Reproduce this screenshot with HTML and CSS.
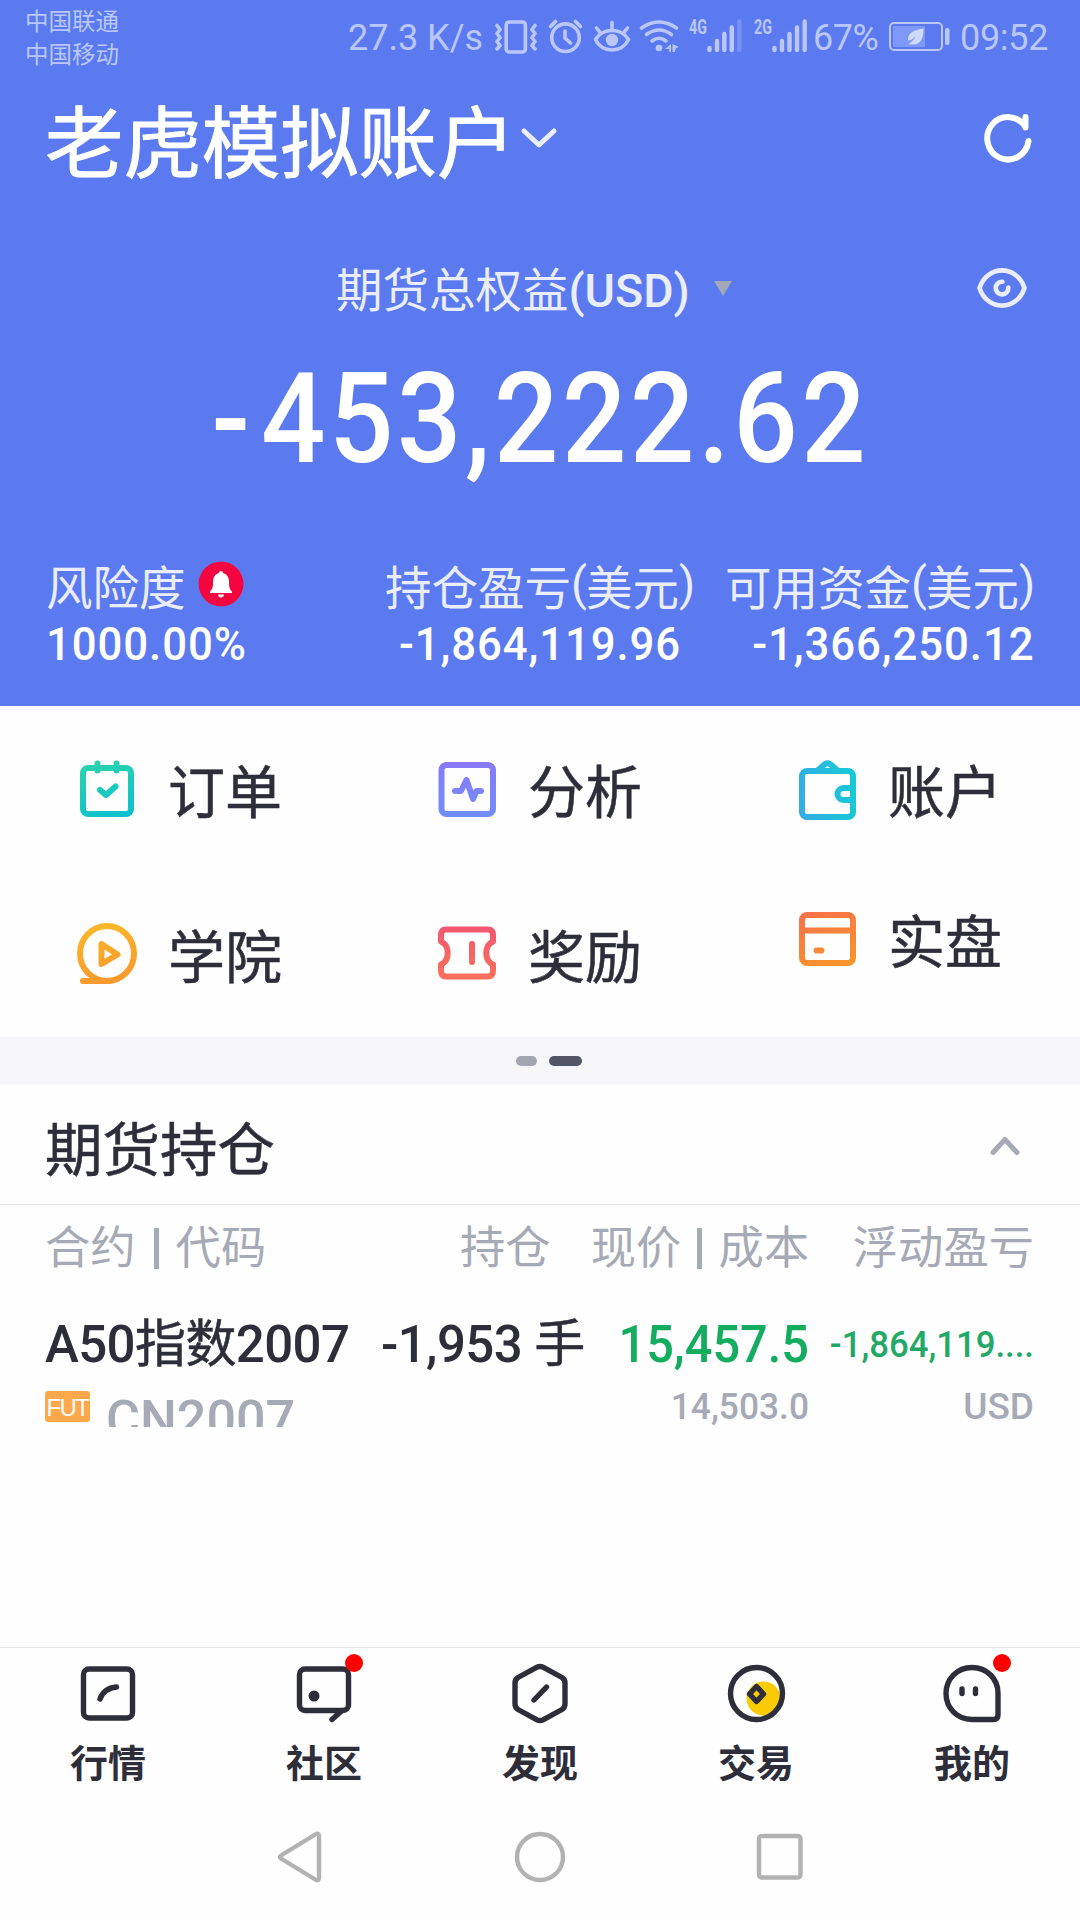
FILE: index.html
```html
<!DOCTYPE html>
<html lang="zh-CN">
	<head>
		<meta charset="utf-8">
		<title>老虎模拟账户</title>
		<link rel="stylesheet" href="styles.css">
	</head>
	<body>

		<div class="top">
			<!-- 状态栏 -->
			<div class="status">
				<div class="carrier">
					<p>中国联通</p>
					<p>中国移动</p>
				</div>
				<span class="speed">27.3 K/s</span>
				<svg class="s-vib" width="44" height="36" viewBox="0 0 44 36">
					<rect x="12.2" y="4" width="19.2" height="30" rx="3"/>
					<path d="M3 7.5l3 4-3 4 3 4-3 4 3 4-3 3.500M41 7.500l-3 4 3 4-3 4 3 4-3 4 3 3.500"/>
				</svg>
				<svg class="s-alarm" width="36" height="36" viewBox="0 0 36 36">
					<circle cx="17.500" cy="19.700" r="13.800"/>
					<path d="M17 13v7l5.500 5M2.500 8.500l5-5M32.500 8.500l-5-5"/>
				</svg>
				<svg class="s-eye" width="40" height="36" viewBox="0 0 40 36">
					<path d="M3.500 21.500C11 9.500 29 9.500 36.500 21.500C30 35.500 10 35.500 3.500 21.500zM20 4.500v7M4.500 10l4 5M35.500 10l-4 5"/>
					<circle class="full" cx="20" cy="22" r="6.200"/>
				</svg>
				<svg class="s-wifi" width="44" height="36" viewBox="0 0 44 36">
					<path d="M3.500 10Q21 -2 38.500 10M8.500 16.500Q21 7.500 33.500 16.500M14 23Q21 17.500 28 23"/>
					<circle class="full" cx="21" cy="30" r="3.300"/>
					<path class="full" d="M33 26v8h-1.800v-3h-4.200zM34.500 26l6.500 3-3.200 1.200-1 3.800h-2.300z"/>
				</svg>
				<svg class="s-sig" width="56" height="36" viewBox="0 0 56 36">
					<text x="2" y="16" textLength="18" lengthAdjust="spacingAndGlyphs">4G</text>
					<path class="bar" d="M22.500 30v2M30 23v9M37.300 16v16M44.800 9.500v22.500"/>
					<path class="bar dim" d="M52.400 3.500v28.500"/>
				</svg>
				<svg class="s-sig s-sig2" width="56" height="36" viewBox="0 0 56 36">
					<text x="2" y="16" textLength="18" lengthAdjust="spacingAndGlyphs">2G</text>
					<path class="bar" d="M22.500 30v2M30 23v9M37.500 16v16M45 9.500v22.500M52.700 3.500v28.500"/>
				</svg>
				<span class="power">67%</span>
				<svg class="s-bat" width="64" height="36" viewBox="0 0 64 36">
					<rect class="shell" x="3" y="5" width="52" height="27" rx="4"/>
					<rect class="level" x="6" y="8" width="32" height="21"/>
					<rect class="full" x="58" y="10" width="4.500" height="17" rx="2"/>
					<path class="leaf" d="M36.500 10.500c-9 1.500-16 4-15.500 12l3-.5 5-4-4 5.500-3.500 2.500c9 2 15-1 15-15.500z"/>
				</svg>
				<span class="time">09:52</span>
			</div>

			<!-- 账户标题 -->
			<div class="title">
				<h1>老虎模拟账户</h1>
				<svg class="down" width="38" height="24" viewBox="0 0 38 24"><path d="M4 3l15 14 15-14"/></svg>
				<svg class="refresh" width="52" height="52" viewBox="0 0 52 52"><path d="M46.500 27A20.700 21.200 0 1 1 43.500 13M43.500 3v10.500"/></svg>
			</div>

			<!-- 总权益 -->
			<div class="equity">
				<span class="equity-name">期货总权益<em>(USD)</em></span>
				<i class="tri"></i>
				<svg class="eye" width="52" height="44" viewBox="0 0 52 44">
					<path d="M3.500 22C11 -1.500 41 -1.500 48.500 22C41 45.500 11 45.500 3.500 22z"/>
					<path d="M26.500 15.800A6.300 6.300 0 1 0 32.300 21.500"/>
				</svg>
			</div>
			<div class="total"><span><em>-</em>453,222.62</span></div>

			<div class="info">
				<div class="info-l">
					<p>风险度
						<svg width="46" height="46" viewBox="0 0 46 46">
							<circle cx="23" cy="23" r="22.500" fill="#f5053f"/>
							<path d="M23 10c1.300 0 2 .8 2 2 4 1 6 4.500 6 9 0 6 .8 7.500 3 9.500v1.500H12v-1.500c2.200-2 3-3.500 3-9.500 0-4.500 2-8 6-9 0-1.200.700-2 2-2zM20 33.500h6c0 4-6 4-6 0z" fill="#fff"/>
						</svg>
					</p>
					<b>1000.00%</b>
				</div>
				<div class="info-c">
					<p>持仓盈亏<em>(</em>美元<em>)</em></p>
					<b>-1,864,119.96</b>
				</div>
				<div class="info-r">
					<p>可用资金<em>(</em>美元<em>)</em></p>
					<b>-1,366,250.12</b>
				</div>
			</div>
		</div>

		<!-- 渐变色 -->
		<svg class="defs" width="0" height="0">
			<defs>
				<linearGradient id="g1" gradientUnits="userSpaceOnUse" x1="20" y1="0" x2="40" y2="64"><stop offset="0" stop-color="#2bd3ab"/><stop offset="1" stop-color="#0cc0d0"/></linearGradient>
				<linearGradient id="g2" gradientUnits="userSpaceOnUse" x1="32" y1="0" x2="32" y2="64"><stop offset="0" stop-color="#8b78fa"/><stop offset="1" stop-color="#6f8ffb"/></linearGradient>
				<linearGradient id="g3" gradientUnits="userSpaceOnUse" x1="0" y1="40" x2="64" y2="28"><stop offset="0" stop-color="#35ace4"/><stop offset="1" stop-color="#15cbd5"/></linearGradient>
				<linearGradient id="g4" gradientUnits="userSpaceOnUse" x1="26" y1="0" x2="40" y2="64"><stop offset="0" stop-color="#fbb829"/><stop offset="1" stop-color="#f8962e"/></linearGradient>
				<linearGradient id="g5" gradientUnits="userSpaceOnUse" x1="32" y1="0" x2="32" y2="64"><stop offset="0" stop-color="#f25672"/><stop offset="1" stop-color="#fb7358"/></linearGradient>
				<linearGradient id="g6" gradientUnits="userSpaceOnUse" x1="20" y1="0" x2="44" y2="64"><stop offset="0" stop-color="#f8704a"/><stop offset="1" stop-color="#f7982a"/></linearGradient>
			</defs>
		</svg>

		<!-- 功能入口 -->
		<ul class="menu">
			<li>
				<svg width="64" height="64" viewBox="0 0 64 64" stroke="url(#g1)"><rect x="8" y="11" width="48" height="46" rx="5"/><path d="M22.500 6.500v7M41.500 6.500v7M25 33l6 5 9.500-8.500"/></svg>
				<span>订单</span>
			</li>
			<li>
				<svg width="64" height="64" viewBox="0 0 64 64" stroke="url(#g2)"><rect x="6.500" y="8" width="51.500" height="49" rx="5"/><path d="M20 34h6l5.500-11 6.500 19 3.500-8h4.500"/></svg>
				<span>分析</span>
			</li>
			<li>
				<svg width="64" height="64" viewBox="0 0 64 64" stroke="url(#g3)"><rect x="7" y="14" width="51" height="46" rx="5"/><path d="M23 13l7-6q2.500-1.500 5 0l7 6M57 31h-8.500a5 5 0 0 0 0 12h8.500"/></svg>
				<span>账户</span>
			</li>
			<li>
				<svg width="64" height="64" viewBox="0 0 64 64" stroke="url(#g4)"><ellipse cx="32" cy="31.500" rx="27" ry="27.500"/><path d="M8 59h26M26.500 22v20l16-9.500z"/></svg>
				<span>学院</span>
			</li>
			<li>
				<svg width="64" height="64" viewBox="0 0 64 64" stroke="url(#g5)"><path d="M11 7.500h42q5 0 5 6v6c-9 4-9 19 0 23v6q0 6-5 6H11q-5 0-5-6v-6c9-4 9-19 0-23v-6q0-6 5-6zM37 22v18"/></svg>
				<span>奖励</span>
			</li>
			<li class="up">
				<svg width="64" height="64" viewBox="0 0 64 64" stroke="url(#g6)"><rect x="7" y="8" width="51" height="48" rx="5"/><path d="M8 23.500h49M21.500 43.500h5"/></svg>
				<span>实盘</span>
			</li>
		</ul>
		<div class="dots"><i></i><i class="active"></i></div>

		<!-- 持仓列表 -->
		<div class="hold-title">
			<h2>期货持仓</h2>
			<svg width="32" height="20" viewBox="0 0 32 20"><path d="M4 16.500l12-13 12 13"/></svg>
		</div>
		<div class="hold">
			<div class="row head">
				<span class="c1">合约<i></i>代码</span>
				<span class="c2">持仓</span>
				<span class="c3">现价<i></i>成本</span>
				<span class="c4">浮动盈亏</span>
			</div>
			<div class="row first">
				<span class="c1">A50<em>指数</em>2007</span>
				<span class="c2">-1,953 <em>手</em></span>
				<span class="c3">15,457.5</span>
				<span class="c4">-1,864,119....</span>
			</div>
			<div class="row second">
				<span class="c1"><i class="fut">FUT</i><b>CN2007</b></span>
				<span class="c2"></span>
				<span class="c3">14,503.0</span>
				<span class="c4">USD</span>
			</div>
		</div>

		<!-- 底部导航 -->
		<ul class="tab">
			<li>
				<svg width="64" height="64" viewBox="0 0 64 64"><rect x="7.500" y="8" width="49" height="49" rx="5.500"/><path d="M24 38q4-11 16.500-12"/></svg>
				<span>行情</span>
			</li>
			<li>
				<svg width="64" height="64" viewBox="0 0 64 64"><rect x="7.500" y="8" width="49" height="41.500" rx="5.500"/><path d="M50 49.500l-10 9"/><circle class="black" cx="22" cy="35" r="5.500"/></svg>
				<i class="red"></i>
				<span>社区</span>
			</li>
			<li>
				<svg width="64" height="64" viewBox="0 0 64 64"><path d="M29 6.200q3-1.500 6 0L54 16.500q3 2 3 5.500v21q0 3.500-3 5.500L35 58.800q-3 1.500-6 0L10 48.500q-3-2-3-5.500V22q0-3.500 3-5.500zM26 39l12.500-13"/></svg>
				<span>发现</span>
			</li>
			<li>
				<svg width="64" height="64" viewBox="0 0 64 64"><circle cx="39.500" cy="37.500" r="17" fill="#f8cb05" stroke="none"/><ellipse cx="32.500" cy="32.500" rx="26" ry="26"/><path d="M32.500 25.500l7 7.500-7 7.500-7-7.500z"/></svg>
				<span>交易</span>
			</li>
			<li>
				<svg width="64" height="64" viewBox="0 0 64 64"><path d="M32 6.500C47 6.500 58 18 58 32v22q0 4.500-4.500 4.500H32C17 58.500 6 47 6 32.500S17 6.500 32 6.500zM22 28v4.500M35.500 28v4.500"/></svg>
				<i class="red"></i>
				<span>我的</span>
			</li>
		</ul>
		<div class="sys">
			<svg width="52" height="56" viewBox="0 0 52 56"><path d="M5 29.500q-2-1.500 0-3L40 5q3-1 3 2v42q0 3-3 2z"/></svg>
			<svg width="56" height="56" viewBox="0 0 56 56"><circle cx="28" cy="28" r="23"/></svg>
			<svg width="56" height="56" viewBox="0 0 56 56"><rect x="7" y="7" width="41.500" height="41.500" rx="2.500"/></svg>
		</div>

	</body>
</html>
```

FILE: styles.css
```css
* {
	margin: 0;
	padding: 0;
	box-sizing: border-box;
}
body {
	width: 1080px;
	height: 1920px;
	overflow: hidden;
	background-color: #fefefe;
	color: #2d2e3a;
	font-family: Roboto, "Noto Sans CJK SC", sans-serif;
}
ul {
	list-style: none;
}
em, i {
	font-style: normal;
}
svg {
	display: block;
	flex: none;
	fill: none;
	overflow: visible;
	stroke-linecap: round;
	stroke-linejoin: round;
}
.defs {
	position: absolute;
}

/* 顶部 */
.top {
	height: 706px;
	background-color: #5b7af0;
	color: #fff;
}
.status {
	display: flex;
	align-items: center;
	height: 72px;
	padding-left: 25px;
	color: #b9c7fb;
	font-size: 36px;
	white-space: nowrap;
}
.status svg {
	stroke: #b9c7fb;
	stroke-width: 3.6px;
}
.status .full {
	fill: #b9c7fb;
	stroke: none;
}
.carrier {
	width: 324px;
	padding-top: 6px;
	font-size: 23.5px;
	line-height: 33px;
}
.speed {
	width: 145px;
	margin-left: -1px;
	margin-right: 1px;
	padding-top: 4px;
}
.s-alarm {
	margin-left: 10px;
}
.s-eye {
	margin-left: 8px;
}
.s-wifi {
	margin-left: 6px;
}
.s-sig {
	margin-left: 5px;
}
.s-sig2 {
	margin-left: 9px;
}
.s-sig text {
	font-size: 21px;
	font-weight: bold;
	fill: #b9c7fb;
	stroke: none;
}
.status .bar {
	stroke-width: 4.4px;
}
.status .dim {
	opacity: 0.3;
}
.power {
	width: 74px;
	margin-left: 5px;
	padding-top: 4px;
	letter-spacing: -0.5px;
}
.status .shell {
	stroke-width: 2px;
}
.status .level {
	fill: #7e98f8;
	stroke: none;
}
.status .leaf {
	fill: #d0dafd;
	stroke: none;
}
.time {
	margin-left: 9px;
	padding-top: 4px;
	letter-spacing: -0.3px;
}

.title {
	display: flex;
	align-items: center;
	height: 136px;
	padding: 0 46px 0 45px;
}
.title h1 {
	padding-top: 9px;
	font-size: 78.4px;
	font-weight: 400;
	line-height: 136px;
	-webkit-text-stroke: 1px #fff;
}
.title svg {
	stroke: #fff;
	stroke-width: 6px;
}
.title .down {
	margin-left: 5px;
	stroke: #e9edfd;
	stroke-width: 5px;
}
.title .refresh {
	margin-left: auto;
}

.equity {
	display: flex;
	align-items: center;
	height: 160px;
	padding: 0 52px 0 336px;
	color: #e9edfd;
	font-size: 46.5px;
}
.equity-name {
	padding-bottom: 4px;
	white-space: nowrap;
}
.equity-name em {
	font-weight: 500;
}
.tri {
	margin-left: 24px;
	border: 9px solid transparent;
	border-top: 15px solid #a3a9ba;
	border-bottom: 0;
}
.eye {
	margin-left: auto;
	stroke: #e9edfd;
	stroke-width: 4.6px;
}
.total {
	height: 130px;
	text-align: center;
	font-size: 126px;
	font-weight: 500;
	line-height: 102px;
}
.total span {
	display: inline-block;
	letter-spacing: 4px;
	transform: scaleX(0.9);
}
.total em {
	margin-right: 8px;
}

.info {
	display: flex;
	height: 208px;
	padding: 61px 46px 0 46px;
	white-space: nowrap;
}
.info p {
	display: flex;
	align-items: center;
	height: 50px;
	color: #e9edfd;
	font-size: 46.5px;
}
.info p svg {
	margin-left: 12px;
}
.info em {
	width: 15px;
}
.info b {
	display: block;
	height: 60px;
	font-size: 47px;
	font-weight: 500;
	line-height: 70px;
	letter-spacing: 1px;
	transform: scaleX(0.93);
	transform-origin: left;
}
.info-l {
	width: 339px;
}
.info-c {
	width: 310px;
}
.info-c b {
	text-align: center;
	transform-origin: center;
}
.info-r {
	width: 309px;
	margin-left: auto;
}
.info-r b {
	float: right;
	transform-origin: right;
}

/* 功能入口 */
.menu {
	display: grid;
	grid-template-columns: 360px 360px 360px;
	grid-template-rows: 165px 166px;
	height: 331px;
}
.menu li {
	display: flex;
	align-items: center;
	padding-left: 75px;
}
.menu svg {
	stroke-width: 6px;
}
.menu span {
	margin-left: 29px;
	padding-top: 10px;
	font-size: 57px;
	line-height: 84px;
	-webkit-text-stroke: 0.5px #2d2e3a;
}
.menu .up {
	padding-bottom: 30px;
}
.dots {
	display: flex;
	align-items: center;
	justify-content: center;
	gap: 12px;
	height: 48px;
	padding-left: 18px;
	background-color: #f6f6f8;
}
.dots i {
	width: 21px;
	height: 10px;
	border-radius: 5px;
	background-color: #a3a6b1;
}
.dots .active {
	width: 33px;
	background-color: #525566;
}

/* 持仓 */
.hold-title {
	display: flex;
	align-items: center;
	justify-content: space-between;
	height: 120px;
	padding: 2px 59px 0 45px;
	border-bottom: 1px solid #e6e6e8;
}
.hold-title h2 {
	font-size: 57.5px;
	font-weight: 400;
	-webkit-text-stroke: 0.5px #2d2e3a;
}
.hold-title svg {
	stroke: #a6aab6;
	stroke-width: 5px;
}
.hold {
	height: 442px;
}
.row {
	display: grid;
	grid-template-columns: 336px 204px 224px 225px;
	padding-left: 45px;
	white-space: nowrap;
}
.row .c3, .row .c4 {
	text-align: right;
	transform-origin: right;
}
.head {
	height: 82px;
	color: #a6aab6;
	font-size: 45.3px;
	line-height: 88px;
}
.head .c2 {
	padding-left: 79px;
}
.head i {
	display: inline-block;
	width: 5px;
	height: 41px;
	margin: 0 17px 0 18px;
	background-color: #a6aab6;
	vertical-align: -5px;
}
.head .c3 i {
	margin: 0 16px;
}
.first {
	height: 104px;
	font-size: 51px;
	font-weight: 500;
	line-height: 116px;
}
.first em {
	font-weight: 400;
	-webkit-text-stroke: 0.5px #2d2e3a;
}
.first .c1, .first .c2 {
	letter-spacing: -0.6px;
}
.first .c3 {
	color: #14ad60;
	transform: scaleX(0.955);
}
.first .c4 {
	color: #22a867;
	font-size: 36px;
	transform: scaleX(0.965);
}
.second {
	height: 36px;
	color: #a6aab6;
	font-size: 37px;
	font-weight: 500;
	line-height: 32px;
}
.second .c1 {
	display: flex;
	overflow: hidden;
}
.second .c3 {
	transform: scaleX(0.955);
}
.fut {
	width: 45px;
	height: 31px;
	border-radius: 3px;
	background-color: #fea84c;
	color: #fff;
	font-family: "Liberation Sans", sans-serif;
	font-size: 24px;
	font-weight: 400;
	line-height: 33px;
	text-align: center;
	letter-spacing: -1.6px;
}
.second b {
	margin-left: 16px;
	font-size: 52px;
	font-weight: 500;
	line-height: 58px;
}

/* 底部 */
.tab {
	display: grid;
	grid-template-columns: repeat(5, 216px);
	height: 154px;
	border-top: 1px solid #e6e6e8;
}
.tab li {
	position: relative;
	padding-top: 13px;
	text-align: center;
}
.tab svg {
	margin: 0 auto;
	stroke: #2d2e3a;
	stroke-width: 5.4px;
}
.tab .black {
	fill: #2d2e3a;
	stroke: none;
}
.tab span {
	display: block;
	font-size: 38px;
	font-weight: 700;
	line-height: 78px;
}
.red {
	position: absolute;
	top: 6px;
	left: 129px;
	width: 18px;
	height: 18px;
	border-radius: 50%;
	background-color: #fe0000;
}
.sys {
	display: flex;
	align-items: center;
	justify-content: space-between;
	height: 112px;
	padding: 0 272px 0 276px;
}
.sys svg {
	stroke: #b2b2b2;
	stroke-width: 4.4px;
}
```
